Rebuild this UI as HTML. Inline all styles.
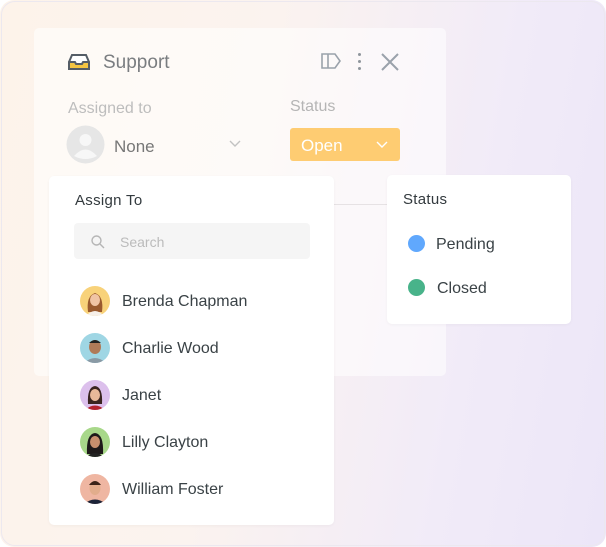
<!DOCTYPE html>
<html><head><style>
*{margin:0;padding:0;box-sizing:border-box}
body{width:606px;height:547px;background:#fff;font-family:"Liberation Sans",sans-serif;position:relative;overflow:hidden}
.frame{position:absolute;left:0;top:0;width:606px;height:547px;border-radius:14px;background:linear-gradient(100deg,#fdf3ea 0%,#fbf3ef 40%,#f1ebf8 75%,#ece6f8 100%);overflow:hidden}
.bd{position:absolute;left:1px;top:1px;width:604px;height:545px;border-radius:14px;border:1px solid #ece8ef}
.card{position:absolute;left:34px;top:28px;width:412px;height:348px;background:rgba(255,255,255,0.55);border-radius:5px}
.t{position:absolute;white-space:nowrap}
.panel{position:absolute;background:#fff;border-radius:5px;box-shadow:0 1px 3px rgba(0,0,0,0.04)}
.av{position:absolute;left:31px;width:30px;height:30px;border-radius:50%;overflow:hidden}
.nm{position:absolute;left:73px;font-size:16px;color:#3a4246}
</style></head><body>
<div class="frame">
<div class="card"></div>
<svg class="t" style="left:67px;top:52px" width="24" height="20" viewBox="0 0 24 20"><path d="M2 10 L5 3 H19 L22 10 V17 H2 Z" fill="#fff" stroke="#555d66" stroke-width="2"/><path d="M2 10 H8 L9 12 H15 L16 10 H22 V17 H2 Z" fill="#f5c542" stroke="#555d66" stroke-width="2" stroke-linejoin="round"/></svg>
<div class="t" style="left:103px;top:52px;font-size:19px;color:#7a7d80">Support</div>
<svg class="t" style="left:320px;top:52px" width="22" height="18" viewBox="0 0 22 18"><path d="M2 2 H15 L20 9 L15 16 H2 Z M8 2 V16" fill="none" stroke="#9aa2ab" stroke-width="1.6"/></svg>
<div class="t" style="left:358px;top:53px;width:3px;height:3px;border-radius:50%;background:#8f959c;box-shadow:0 7px 0 #8f959c,0 14px 0 #8f959c"></div>
<svg class="t" style="left:381px;top:53px" width="18" height="18" viewBox="0 0 18 18"><path d="M1 1 L17 17 M17 1 L1 17" stroke="#9aa2ab" stroke-width="2"/></svg>
<div class="t" style="left:68px;top:100px;font-size:16px;color:#bdbdbd">Assigned to</div>
<div class="t" style="left:290px;top:98px;font-size:16px;color:#b5b5b5">Status</div>
<svg class="t" style="left:66px;top:125px" width="39" height="39" viewBox="0 0 39 39"><circle cx="19.5" cy="19.5" r="19" fill="#e6e6e6"/><circle cx="19.5" cy="15" r="6" fill="#f7f7f7"/><path d="M8 31 Q19.5 18 31 31 Q19.5 37 8 31Z" fill="#f7f7f7"/></svg>
<div class="t" style="left:114px;top:137px;font-size:17px;color:#777">None</div>
<svg class="t" style="left:229px;top:140px" width="12" height="8"><path d="M1 1 L6 6 L11 1" fill="none" stroke="#c2c2c2" stroke-width="1.4"/></svg>
<div class="t" style="left:290px;top:128px;width:110px;height:33px;background:#fecc72;border-radius:3px"></div>
<div class="t" style="left:301px;top:136px;font-size:17px;color:#fff">Open</div>
<svg class="t" style="left:376px;top:141px" width="12" height="8"><path d="M1 1 L6 6 L11 1" fill="none" stroke="#fff" stroke-width="1.4"/></svg>
<div class="t" style="left:334px;top:204px;width:53px;height:1px;background:#e6e2e4"></div>

<div class="panel" style="left:49px;top:176px;width:285px;height:349px">
<div class="t" style="left:26px;top:16px;font-size:15px;color:#333a3e;letter-spacing:.3px">Assign To</div>
<div class="t" style="left:25px;top:47px;width:236px;height:36px;background:#f5f5f5;border-radius:4px"></div>
<svg class="t" style="left:42px;top:59px" width="14" height="14"><circle cx="5.5" cy="5.5" r="4.5" fill="none" stroke="#b5b5b5" stroke-width="1.4"/><path d="M9 9 L13 13" stroke="#b5b5b5" stroke-width="1.4"/></svg>
<div class="t" style="left:71px;top:58px;font-size:14px;color:#bbb">Search</div>
<div class="av" style="top:110px;background:#f8d27a"><svg width="30" height="30"><path d="M8 26 Q6 10 15 7 Q24 10 22 26Z" fill="#9a5a2e"/><ellipse cx="15" cy="14" rx="5" ry="6" fill="#f0c4a4"/><path d="M6 30 Q15 20 24 30Z" fill="#f6f0ea"/></svg></div>
<div class="nm" style="top:117px">Brenda Chapman</div>
<div class="av" style="top:157px;background:#9fd6e4"><svg width="30" height="30"><ellipse cx="15" cy="14" rx="6" ry="7" fill="#b07a58"/><path d="M9 10 Q15 4 21 10Z" fill="#222"/><path d="M4 30 Q15 20 26 30Z" fill="#8a9aa5"/></svg></div>
<div class="nm" style="top:164px">Charlie Wood</div>
<div class="av" style="top:204px;background:#dcc0ec"><svg width="30" height="30"><path d="M8 24 Q7 7 15 6 Q23 7 22 24Z" fill="#3a2420"/><ellipse cx="15" cy="15" rx="5" ry="6" fill="#e8b89a"/><path d="M5 30 Q15 21 25 30Z" fill="#b3212f"/></svg></div>
<div class="nm" style="top:211px">Janet</div>
<div class="av" style="top:251px;background:#a8d88a"><svg width="30" height="30"><path d="M7 27 Q6 7 15 6 Q24 7 23 27Z" fill="#1e1a1a"/><ellipse cx="15" cy="15" rx="5" ry="6" fill="#c8906e"/><path d="M6 30 Q15 22 24 30Z" fill="#222"/></svg></div>
<div class="nm" style="top:258px">Lilly Clayton</div>
<div class="av" style="top:298px;background:#efb6a2"><svg width="30" height="30"><ellipse cx="15" cy="14" rx="5.5" ry="7" fill="#e2ad8c"/><path d="M9 11 Q15 3 21 11Z" fill="#3a2418"/><path d="M4 30 Q15 21 26 30Z" fill="#1c2338"/></svg></div>
<div class="nm" style="top:305px">William Foster</div>
</div>

<div class="panel" style="left:387px;top:175px;width:184px;height:149px">
<div class="t" style="left:16px;top:16px;font-size:15px;color:#333a3e;letter-spacing:.3px">Status</div>
<div class="t" style="left:21px;top:60px;width:17px;height:17px;border-radius:50%;background:#60a8fd"></div>
<div class="t" style="left:49px;top:61px;font-size:16px;color:#3a4246">Pending</div>
<div class="t" style="left:21px;top:104px;width:17px;height:17px;border-radius:50%;background:#48b38a"></div>
<div class="t" style="left:50px;top:105px;font-size:16px;color:#3a4246">Closed</div>
</div>
</div>
<div class="bd"></div>
</body></html>
